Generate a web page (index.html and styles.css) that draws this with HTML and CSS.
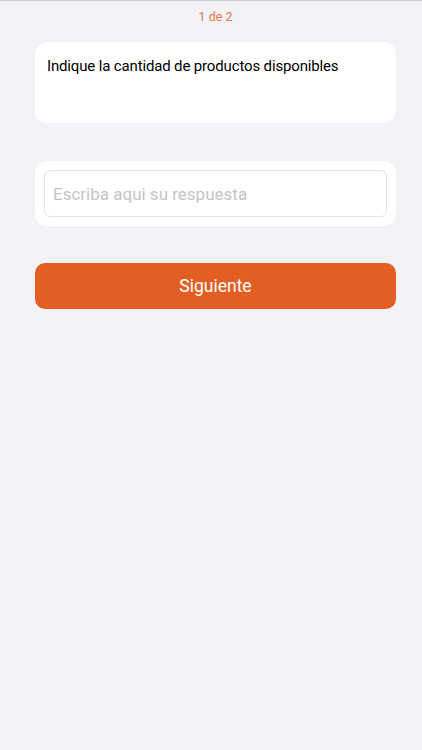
FILE: index.html
```html
<!DOCTYPE html>
<html lang="es">
<head>
<meta charset="utf-8">
<title>Pregunta</title>
<link rel="stylesheet" href="styles.css">
</head>
<body>
<div class="screen">
  <div class="counter">1 de 2</div>
  <div class="card question">Indique la cantidad de productos disponibles</div>
  <div class="card answer">
    <input class="field" type="text" placeholder="Escriba aqui su respuesta">
  </div>
  <button class="next" type="button">Siguiente</button>
</div>
</body>
</html>
```
FILE: styles.css
```css
html, body {
  margin: 0;
  padding: 0;
  background: #f2f2f7;
  font-family: Roboto, "Liberation Sans", sans-serif;
}
.screen {
  min-height: 749px;
  border-top: 1px solid #cfcfd3;
  padding: 0 26px 0 35px;
  display: flex;
  flex-direction: column;
}
.counter {
  text-align: center;
  color: #e8773f;
  font-size: 12.5px;
  line-height: 14px;
  margin-top: 9px;
}
.card {
  background: #ffffff;
  border-radius: 12px;
}
.question {
  margin-top: 18px;
  height: 81px;
  box-sizing: border-box;
  padding: 15px 12px 0 12px;
  font-size: 15px;
  line-height: 18px;
  letter-spacing: -0.15px;
  color: #000000;
}
.answer {
  margin-top: 38px;
  padding: 9px;
}
.field {
  display: block;
  width: 100%;
  box-sizing: border-box;
  height: 47px;
  border: 1px solid #e3e3e6;
  border-radius: 6px;
  padding: 0 8px;
  font-family: Roboto, "Liberation Sans", sans-serif;
  font-size: 17px;
  color: #000;
  background: #fff;
  outline: none;
}
.field::placeholder {
  color: #c4c4c8;
}
.next {
  margin-top: 37px;
  height: 46px;
  border: none;
  border-radius: 10px;
  background: #e35e22;
  color: #ffffff;
  font-family: Roboto, "Liberation Sans", sans-serif;
  font-size: 17.5px;
  padding: 0;
}
```
